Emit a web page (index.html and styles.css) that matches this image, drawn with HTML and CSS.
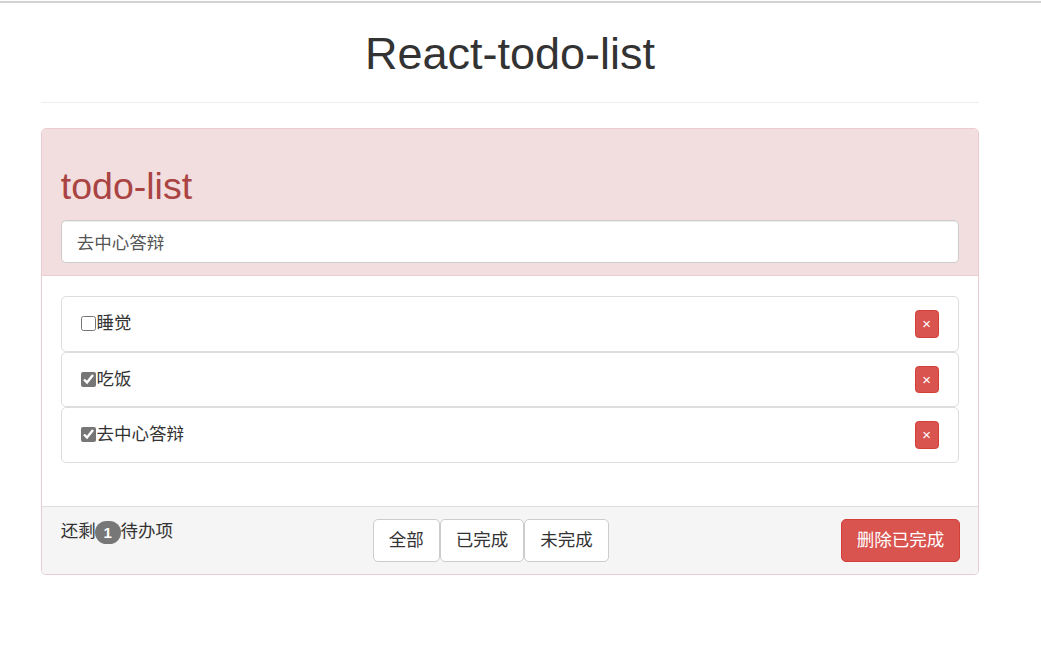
FILE: index.html
```html
<!DOCTYPE html>
<html lang="zh-CN">
<head>
<meta charset="utf-8">
<title>React-todo-list</title>
<link rel="stylesheet" href="styles.css">
</head>
<body>
<div class="topline"></div>
<div class="container">
  <div class="page-header">
    <h1>React-todo-list</h1>
  </div>
  <div class="panel">
    <div class="panel-heading">
      <h2>todo-list</h2>
      <input class="form-control" type="text" value="去中心答辩">
    </div>
    <div class="panel-body">
      <ul class="list">
        <li class="item">
          <label class="item-label"><input type="checkbox" class="check">睡觉</label>
          <button class="btn-del">×</button>
        </li>
        <li class="item">
          <label class="item-label"><input type="checkbox" class="check" checked>吃饭</label>
          <button class="btn-del">×</button>
        </li>
        <li class="item">
          <label class="item-label"><input type="checkbox" class="check" checked>去中心答辩</label>
          <button class="btn-del">×</button>
        </li>
      </ul>
    </div>
    <div class="panel-footer">
      <div class="remain">还剩<span class="badge">1</span>待办项</div>
      <div class="filters">
        <button class="btn">全部</button><button class="btn">已完成</button><button class="btn">未完成</button>
      </div>
      <div class="actions">
        <button class="btn btn-danger">删除已完成</button>
      </div>
    </div>
  </div>
</div>
</body>
</html>
```

FILE: styles.css
```css
* { box-sizing: border-box; }

html, body {
  margin: 0;
  padding: 0;
  background: #fff;
}

body {
  font-family: "Liberation Sans", "Noto Sans CJK SC", sans-serif;
  font-size: 17.5px;
  line-height: 25px;
  color: #333;
}

.topline {
  margin-top: 1px;
  height: 2px;
  background: #d2d2d2;
}

.container {
  width: 979px;
  padding-left: 41px;
}

.page-header {
  margin-top: 25.5px;
  padding-bottom: 23.75px;
  border-bottom: 1px solid #eee;
}

.page-header h1 {
  margin: 0;
  font-size: 45px;
  line-height: 49.5px;
  font-weight: 500;
  text-align: center;
  color: #333;
}

.panel {
  margin-top: 25px;
  border: 1px solid #ebccd1;
  border-radius: 5px;
  background: #fff;
  box-shadow: 0 1px 1px rgba(0,0,0,.05);
}

.panel-heading {
  background: #f2dede;
  border-bottom: 1px solid #ebccd1;
  border-radius: 4px 4px 0 0;
  padding: 12.5px 18.75px;
}

.panel-heading h2 {
  margin: 25px 0 12.5px;
  font-size: 37.5px;
  line-height: 41.25px;
  font-weight: 500;
  color: #a94442;
}

.form-control {
  display: block;
  width: 100%;
  height: 42.5px;
  padding: 7.5px 15px;
  font-family: inherit;
  font-size: 17.5px;
  line-height: 25px;
  color: #555;
  background: #fff;
  border: 1px solid #ccc;
  border-radius: 5px;
  box-shadow: inset 0 1px 1px rgba(0,0,0,.075);
  outline: none;
}

.panel-body {
  padding: 20px 18.75px 18.75px;
}

.list {
  list-style: none;
  margin: 0 0 24.5px;
  padding: 0;
}

.item {
  display: flex;
  align-items: center;
  justify-content: space-between;
  height: 55.5px;
  padding: 12.5px 19.5px 12.5px 18.75px;
  border: 1px solid #ddd;
  border-radius: 5px;
  background: #fff;
}

.item-label {
  display: flex;
  align-items: center;
}

.check {
  width: 15px;
  height: 15px;
  margin: 0 1px 0 0;
  accent-color: #767676;
}

.btn-del {
  width: 24px;
  height: 27.5px;
  padding: 0;
  font-family: inherit;
  font-size: 15px;
  line-height: 1;
  color: #fff;
  background: #d9534f;
  border: 1px solid #d43f3a;
  border-radius: 3.75px;
}

.panel-footer {
  display: grid;
  grid-template-columns: 1fr 1fr 1fr;
  column-gap: 37.5px;
  align-items: start;
  padding: 12.5px 18.75px;
  background: #f5f5f5;
  border-top: 1px solid #ddd;
  border-radius: 0 0 4px 4px;
}

.remain {
  line-height: 25px;
}

.badge {
  display: inline-block;
  min-width: 12.5px;
  padding: 3.75px 8.75px;
  font-size: 15px;
  font-weight: bold;
  line-height: 1;
  color: #fff;
  text-align: center;
  vertical-align: middle;
  background: #777;
  border-radius: 12.5px;
  margin-left: -1px;
}

.filters {
  display: flex;
}

.actions {
  display: flex;
  justify-content: flex-end;
}

.btn {
  height: 42.5px;
  padding: 7.5px 15px;
  font-family: inherit;
  font-size: 17.5px;
  line-height: 25px;
  color: #333;
  background: #fff;
  border: 1px solid #ccc;
  border-radius: 5px;
  white-space: nowrap;
}

.btn-danger {
  color: #fff;
  background: #d9534f;
  border-color: #d43f3a;
  margin-right: -1px;
}
```
